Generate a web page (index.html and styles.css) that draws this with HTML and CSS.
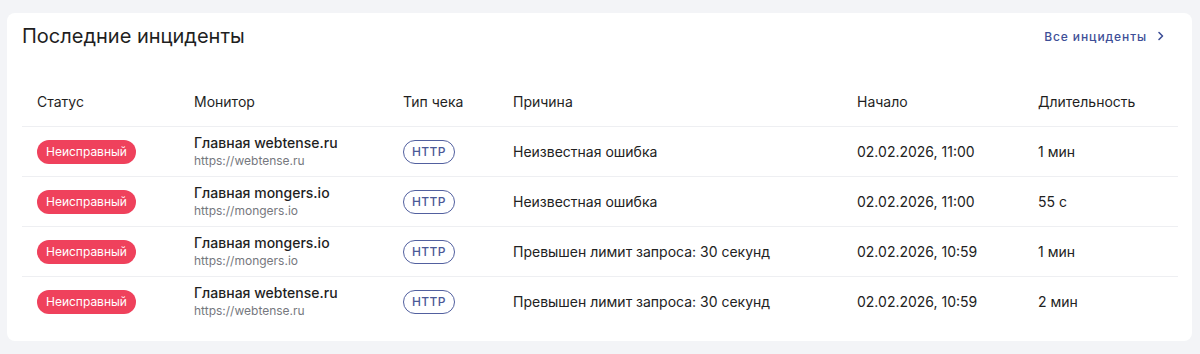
FILE: index.html
```html
<!DOCTYPE html>
<html>
<head>
    <title>Последние инциденты</title>
    <link rel="stylesheet" href="styles.css">
</head>
<body>
    <div class="card">
        <div class="card-head">
            <h2>Последние инциденты</h2>
            <a class="all-link" href="#">Все инциденты
                <svg width="8" height="10" viewBox="0 0 8 10"><path d="M2 1.5 L5.5 5 L2 8.5" fill="none" stroke="currentColor" stroke-width="1.6" stroke-linecap="round" stroke-linejoin="round"/></svg>
            </a>
        </div>

        <div class="table">
            <div class="row head">
                <div>Статус</div>
                <div>Монитор</div>
                <div>Тип чека</div>
                <div>Причина</div>
                <div>Начало</div>
                <div>Длительность</div>
            </div>
            <div class="row">
                <div><span class="badge">Неисправный</span></div>
                <div class="monitor"><span class="mon-name">Главная webtense.ru</span><span class="mon-url">https://webtense.ru</span></div>
                <div><span class="type">HTTP</span></div>
                <div>Неизвестная ошибка</div>
                <div>02.02.2026, 11:00</div>
                <div>1 мин</div>
            </div>
            <div class="row">
                <div><span class="badge">Неисправный</span></div>
                <div class="monitor"><span class="mon-name">Главная mongers.io</span><span class="mon-url">https://mongers.io</span></div>
                <div><span class="type">HTTP</span></div>
                <div>Неизвестная ошибка</div>
                <div>02.02.2026, 11:00</div>
                <div>55 с</div>
            </div>
            <div class="row">
                <div><span class="badge">Неисправный</span></div>
                <div class="monitor"><span class="mon-name">Главная mongers.io</span><span class="mon-url">https://mongers.io</span></div>
                <div><span class="type">HTTP</span></div>
                <div>Превышен лимит запроса: 30 секунд</div>
                <div>02.02.2026, 10:59</div>
                <div>1 мин</div>
            </div>
            <div class="row last">
                <div><span class="badge">Неисправный</span></div>
                <div class="monitor"><span class="mon-name">Главная webtense.ru</span><span class="mon-url">https://webtense.ru</span></div>
                <div><span class="type">HTTP</span></div>
                <div>Превышен лимит запроса: 30 секунд</div>
                <div>02.02.2026, 10:59</div>
                <div>2 мин</div>
            </div>
        </div>
    </div>
</body>
</html>
```

FILE: styles.css
```css
body {
    margin: 0;
    padding: 13px 8px 12px 7px;
    background: #f3f4f7;
    font-family: Inter, "Noto Sans", sans-serif;
    color: #222;
}
.card {
    background: #fff;
    border-radius: 8px;
    padding: 0 14px 15px 15px;
}
.card-head {
    display: flex;
    justify-content: space-between;
    align-items: center;
    height: 46px;
}
.card-head h2 {
    margin: 0;
    font-size: 20px;
    font-weight: 400;
    color: #1f1f1f;
}
.all-link {
    display: flex;
    align-items: center;
    gap: 10px;
    margin-right: 13px;
    color: #3e4f97;
    font-size: 12px;
    font-weight: 500;
    letter-spacing: 0.9px;
    text-decoration: none;
}
.table {
    margin-top: 17px;
}
.row {
    display: grid;
    grid-template-columns: 157px 209px 110px 344px 181px 1fr;
    align-items: center;
    height: 49px;
    border-bottom: 1px solid #eeeff2;
    font-size: 14px;
}
.row > div {
    padding-left: 15px;
}
.row.head {
    height: 50px;
    color: #1f1f1f;
}
.row.last {
    border-bottom: none;
}
.badge {
    display: inline-block;
    height: 24px;
    line-height: 24px;
    padding: 0 9px;
    border-radius: 12px;
    background: #ef415c;
    color: #fff;
    font-size: 12px;
}
.monitor {
    display: flex;
    flex-direction: column;
}
.mon-name {
    line-height: 18px;
    font-weight: 500;
    color: #1f1f1f;
}
.mon-url {
    line-height: 18px;
    font-size: 12px;
    color: #76787e;
}
.type {
    display: inline-block;
    height: 22px;
    line-height: 22px;
    padding: 0 8px;
    border: 1px solid #52609f;
    border-radius: 12px;
    color: #4a5897;
    font-size: 12px;
    font-weight: 500;
    letter-spacing: 0.4px;
}
```
